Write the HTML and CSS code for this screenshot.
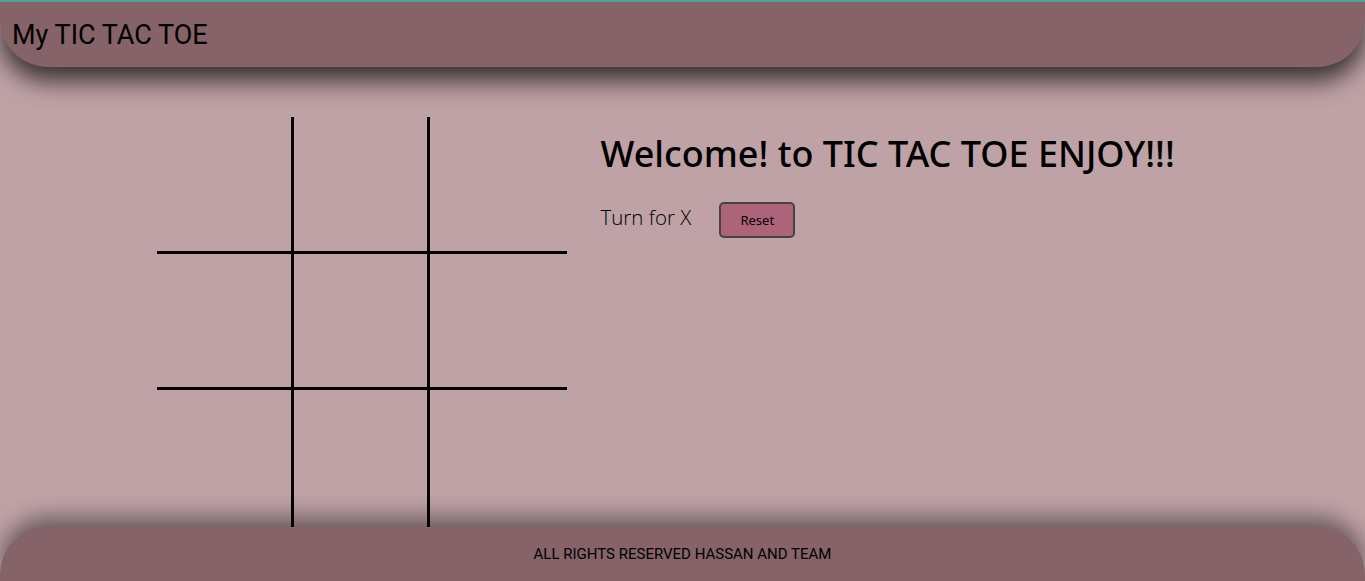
FILE: index.html
```html
<!DOCTYPE html>
<html lang="en">
<head>
<meta charset="utf-8">
<title>My TIC TAC TOE</title>
<link rel="stylesheet" href="styles.css">
</head>
<body>
<nav class="navbar">
  <div class="brand">My TIC TAC TOE</div>
</nav>
<main class="gamecontainer">
  <div class="board">
    <div class="box br bb"></div>
    <div class="box br bb"></div>
    <div class="box bb"></div>
    <div class="box br bb"></div>
    <div class="box br bb"></div>
    <div class="box bb"></div>
    <div class="box br"></div>
    <div class="box br"></div>
    <div class="box"></div>
  </div>
  <div class="gameinfo">
    <h1 class="welcome">Welcome! to TIC TAC TOE ENJOY!!!</h1>
    <div class="controls">
      <span class="turn">Turn for X</span>
      <button class="reset">Reset</button>
    </div>
  </div>
</main>
<footer class="footer">ALL RIGHTS RESERVED HASSAN AND TEAM</footer>
</body>
</html>
```
FILE: styles.css
```css
* { box-sizing: border-box; }
html, body { height: 100%; }
body {
  margin: 0;
  background: #bfa2a6;
  border-top: 2px solid #4fa497;
  overflow: hidden;
  display: flex;
  flex-direction: column;
}
.navbar {
  height: 65px;
  flex: none;
  background: #856369;
  border-radius: 0 0 48px 48px;
  box-shadow: 0 14px 24px rgba(0, 0, 0, 0.7);
  display: flex;
  align-items: center;
  padding: 0 0 0 12px;
  position: relative;
  z-index: 2;
}
.brand {
  font-family: Roboto, "Liberation Sans", sans-serif;
  font-size: 27px;
  color: #000;
}
.gamecontainer {
  flex: 1;
  display: flex;
  padding: 50px 0 0 157px;
  gap: 34px;
}
.board {
  display: grid;
  grid-template-columns: repeat(3, 10vw);
  grid-template-rows: repeat(3, 10vw);
}
.br { border-right: 3px solid #000; }
.bb { border-bottom: 3px solid #000; }
.gameinfo {
  padding-top: 13px;
}
.welcome {
  margin: 0;
  font-family: "Noto Sans", sans-serif;
  font-weight: 500;
  font-size: 36px;
  line-height: 48px;
  color: #000;
}
.controls {
  display: flex;
  align-items: center;
  margin-top: 24px;
  gap: 28px;
}
.turn {
  font-family: "Open Sans", sans-serif;
  font-weight: 300;
  font-size: 20.5px;
  color: #000;
  position: relative;
  top: -3px;
}
.reset {
  width: 76px;
  height: 36px;
  background: #ad647a;
  border: 2px solid #444;
  border-radius: 5px;
  font-family: "Noto Sans", sans-serif;
  font-size: 13px;
  color: #000;
  padding: 0;
}
.footer {
  height: 54px;
  flex: none;
  background: #856369;
  border-radius: 48px 48px 0 0;
  box-shadow: 0 -10px 22px rgba(0, 0, 0, 0.45);
  font-family: Roboto, "Liberation Sans", sans-serif;
  font-size: 15px;
  color: #000;
  display: flex;
  align-items: center;
  justify-content: center;
  position: relative;
  z-index: 2;
}
```
